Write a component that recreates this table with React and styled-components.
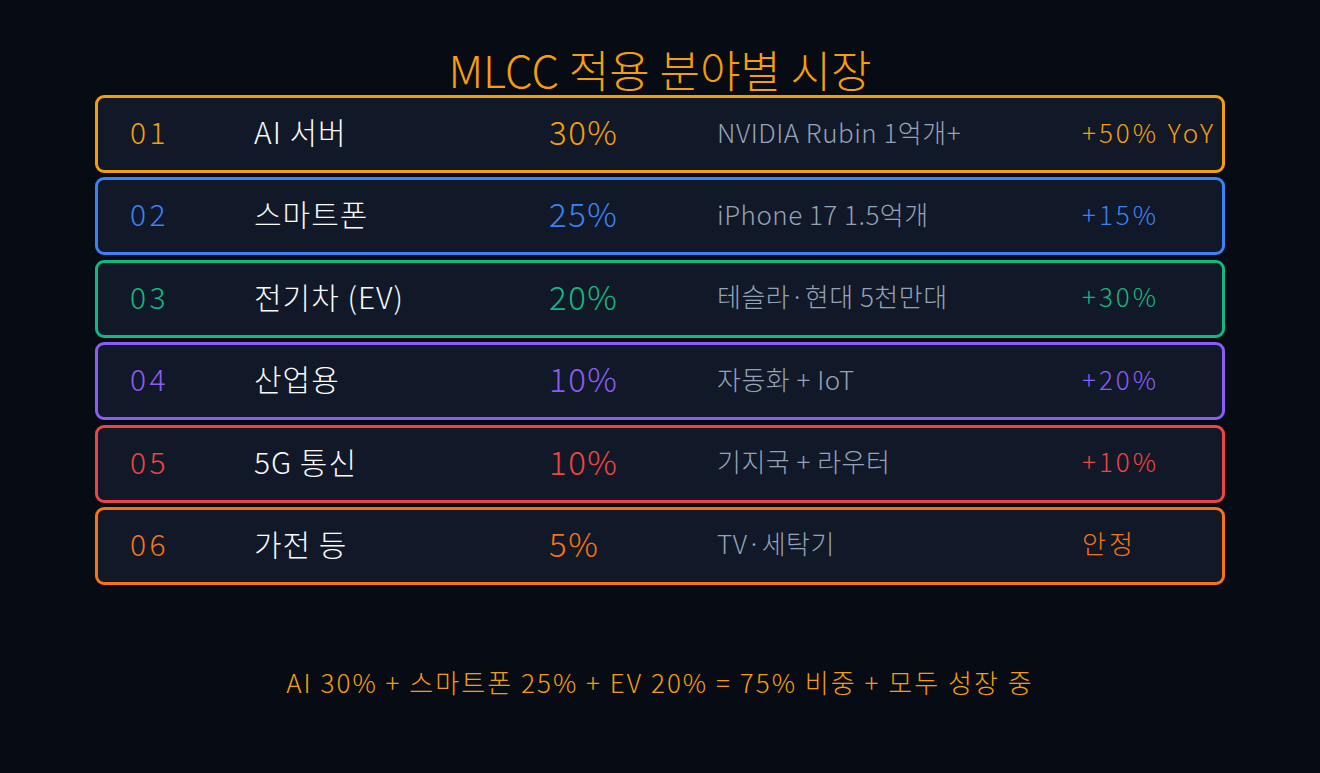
import React from 'react'
import styled, { createGlobalStyle } from 'styled-components'

const GlobalStyle = createGlobalStyle`
  html, body {
    margin: 0;
    padding: 0;
    background: #070b14;
  }
  body {
    font-family: "Noto Sans CJK KR", "Noto Sans", sans-serif;
    font-weight: 300;
  }
`

const Page = styled.div`
  width: 1320px;
  height: 773px;
  box-sizing: border-box;
  padding: 44px 95px 0;
  display: flex;
  flex-direction: column;
  background: #070b14;
`

const Title = styled.h1`
  margin: 0;
  height: 51px;
  text-align: center;
  font-size: 44px;
  line-height: 51px;
  font-weight: 300;
  color: #f59e0b;
`

const List = styled.div`
  display: flex;
  flex-direction: column;
  gap: 4.4px;
`

const Row = styled.div`
  height: 78px;
  box-sizing: border-box;
  border: 3px solid ${props => props.color};
  border-radius: 9px;
  background: #111827;
  display: grid;
  grid-template-columns: 124px 295px 168px 365px 1fr;
  align-items: center;
  padding-left: 32px;
  padding-bottom: 6px;
`

const Num = styled.div`
  font-size: 30px;
  letter-spacing: 3.5px;
  color: ${props => props.color};
`

const Name = styled.div`
  font-size: 30px;
  letter-spacing: 1px;
  color: #f8fafc;
`

const Share = styled.div`
  font-size: 33px;
  letter-spacing: 1.5px;
  color: ${props => props.color};
`

const Desc = styled.div`
  font-size: 26px;
  letter-spacing: 0.5px;
  color: #94a3b8;
  white-space: nowrap;
`

const Growth = styled.div`
  font-size: 26px;
  letter-spacing: 3px;
  color: ${props => props.color};
  white-space: nowrap;
`

const Footer = styled.p`
  margin: 78px 0 0;
  text-align: center;
  font-size: 26px;
  letter-spacing: 2.05px;
  color: #f59e0b;
`

const rows = [
  { no: '01', name: 'AI 서버', share: '30%', desc: 'NVIDIA Rubin 1억개+', growth: '+50% YoY', color: '#f59e0b' },
  { no: '02', name: '스마트폰', share: '25%', desc: 'iPhone 17 1.5억개', growth: '+15%', color: '#3b82f6' },
  { no: '03', name: '전기차 (EV)', share: '20%', desc: '테슬라·현대 5천만대', growth: '+30%', color: '#10b981' },
  { no: '04', name: '산업용', share: '10%', desc: '자동화 + IoT', growth: '+20%', color: '#8b5cf6' },
  { no: '05', name: '5G 통신', share: '10%', desc: '기지국 + 라우터', growth: '+10%', color: '#ef4444' },
  { no: '06', name: '가전 등', share: '5%', desc: 'TV·세탁기', growth: '안정', color: '#f97316' }
]

export default function App() {
  return (
    <>
      <GlobalStyle />
      <Page>
        <Title>MLCC 적용 분야별 시장</Title>
        <List>
          {rows.map(r => (
            <Row key={r.no} color={r.color}>
              <Num color={r.color}>{r.no}</Num>
              <Name>{r.name}</Name>
              <Share color={r.color}>{r.share}</Share>
              <Desc>{r.desc}</Desc>
              <Growth color={r.color}>{r.growth}</Growth>
            </Row>
          ))}
        </List>
        <Footer>AI 30% + 스마트폰 25% + EV 20% = 75% 비중 + 모두 성장 중</Footer>
      </Page>
    </>
  )
}
